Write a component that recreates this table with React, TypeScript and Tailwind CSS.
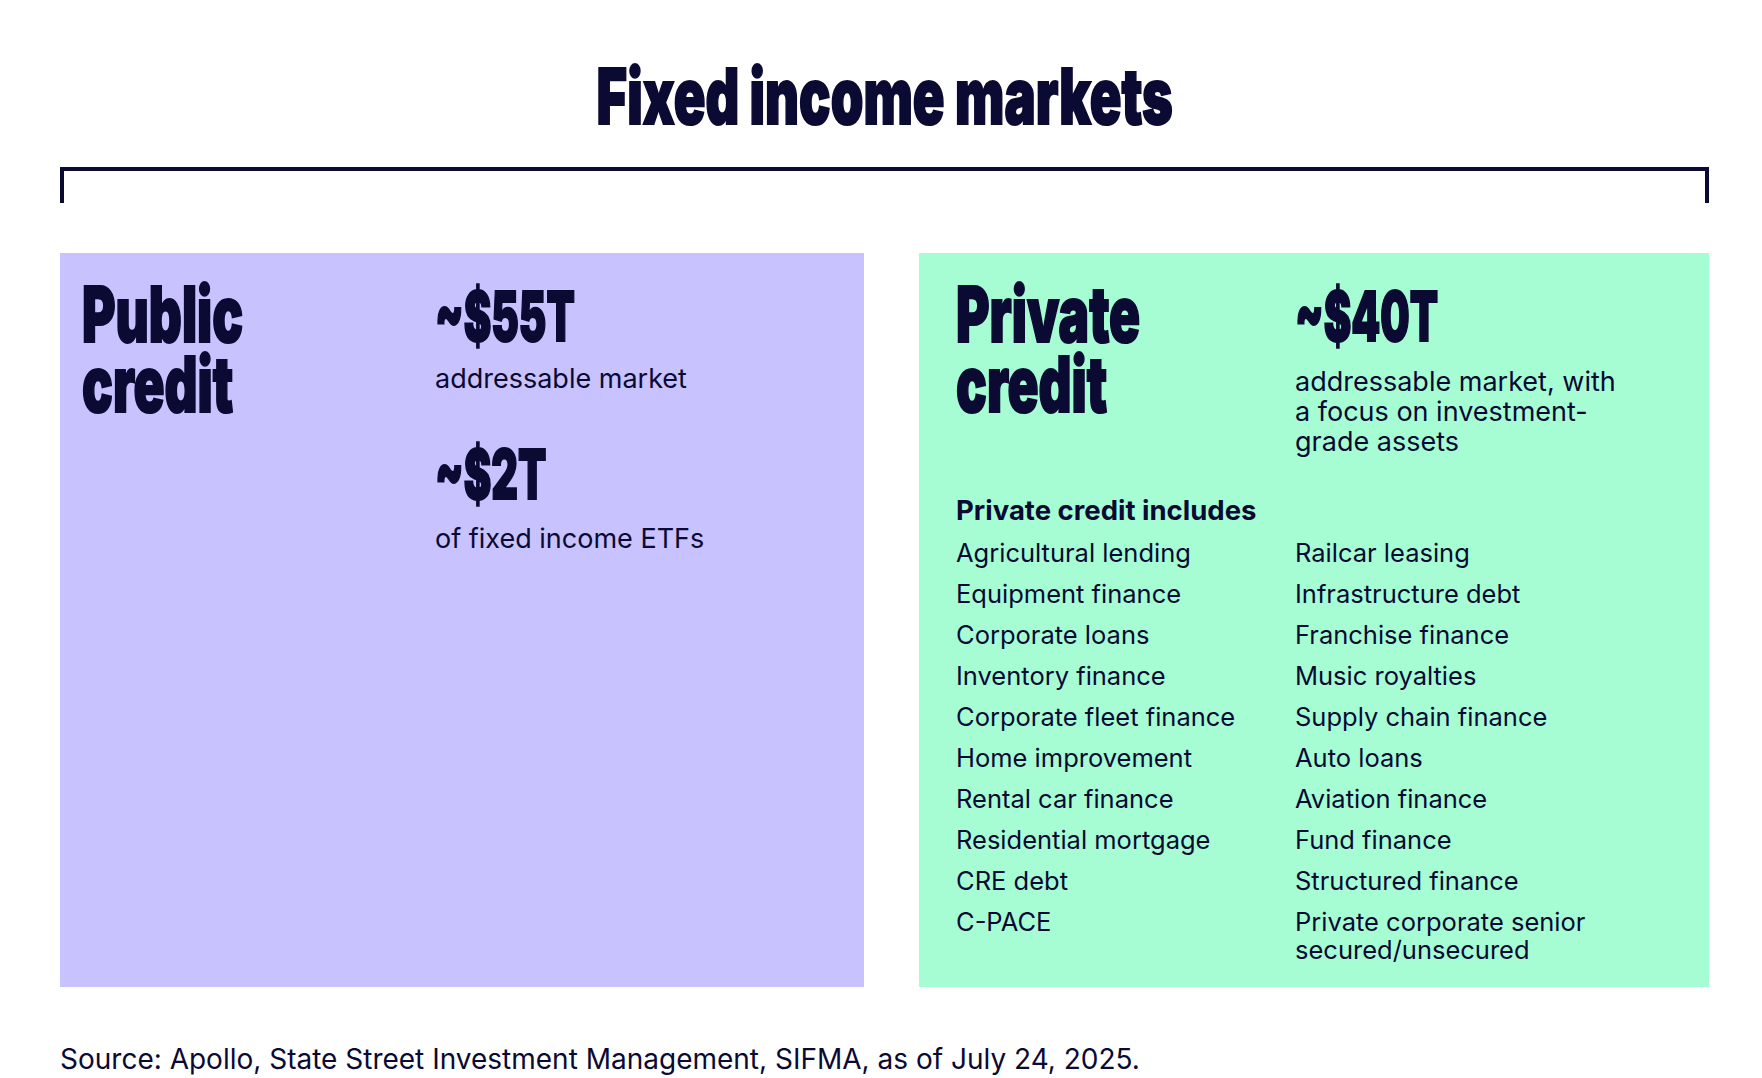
const navy = "text-[#0b0a33]"

const leftItems = [
  "Agricultural lending",
  "Equipment finance",
  "Corporate loans",
  "Inventory finance",
  "Corporate fleet finance",
  "Home improvement",
  "Rental car finance",
  "Residential mortgage",
  "CRE debt",
  "C-PACE",
]

const rightItems = [
  "Railcar leasing",
  "Infrastructure debt",
  "Franchise finance",
  "Music royalties",
  "Supply chain finance",
  "Auto loans",
  "Aviation finance",
  "Fund finance",
  "Structured finance",
  "Private corporate senior secured/unsecured",
]

// condensed heavy display face: no condensed font is installed, so squeeze Inter Black
const display =
  "inline-block whitespace-nowrap font-['Inter',sans-serif] font-black [-webkit-text-stroke:2px_#0b0a33]"

export default function App() {
  return (
    <div className={`min-h-screen bg-white font-['Inter',sans-serif] ${navy} pl-[60px] pr-[53px]`}>
      <div className="pt-[54px] text-center">
        <h1 className={`${display} origin-center scale-x-[0.68] text-[77px] leading-[84px]`}>Fixed income markets</h1>
      </div>

      {/* bracket */}
      <div className="mt-[29px] h-[36px] border-x-[4px] border-t-[4px] border-[#0b0a33]" />

      <div className="mt-[50px] grid h-[734px] grid-cols-[804px_790px] gap-[55px]">
        <div className="flex bg-[#c8c2fe] pl-[22px] pt-[26px]">
          <div className="w-[353px] text-[77px] leading-[70px]">
            <span className={`${display} origin-left scale-x-[0.665]`}>Public</span>
            <br />
            <span className={`${display} origin-left scale-x-[0.665]`}>credit</span>
          </div>
          <div>
            <div className={`${display} origin-left scale-x-[0.6] text-[69px] leading-[74px]`}>~$55T</div>
            <p className="mt-[10px] text-[27px] leading-[32px]">addressable market</p>
            <div className={`${display} origin-left scale-x-[0.6] mt-[42px] text-[69px] leading-[74px]`}>~$2T</div>
            <p className="mt-[12px] text-[27px] leading-[32px]">of fixed income ETFs</p>
          </div>
        </div>

        <div className="bg-[#a6fdd4] pl-[37px] pt-[26px]">
          <div className="flex">
            <div className="w-[339px] text-[77px] leading-[70px]">
              <span className={`${display} origin-left scale-x-[0.665]`}>Private</span>
              <br />
              <span className={`${display} origin-left scale-x-[0.665]`}>credit</span>
            </div>
            <div>
              <div className={`${display} origin-left scale-x-[0.6] text-[69px] leading-[74px]`}>~$40T</div>
              <p className="mt-[14px] w-[330px] text-[27px] leading-[30px]">
                addressable market, with a focus on investment-grade assets
              </p>
            </div>
          </div>

          <h3 className="mt-[37px] text-[27.5px] font-bold leading-[32px]">Private credit includes</h3>
          <div className="mt-[13px] grid grid-cols-[339px_330px] text-[25.5px] leading-[28px]">
            <ul className="flex flex-col gap-[13px]">
              {leftItems.map((item) => (
                <li key={item}>{item}</li>
              ))}
            </ul>
            <ul className="flex flex-col gap-[13px]">
              {rightItems.map((item) => (
                <li key={item}>{item}</li>
              ))}
            </ul>
          </div>
        </div>
      </div>

      <p className="mt-[56px] text-[28px] leading-[32px]">
        Source: Apollo, State Street Investment Management, SIFMA, as of July 24, 2025.
      </p>
    </div>
  )
}
